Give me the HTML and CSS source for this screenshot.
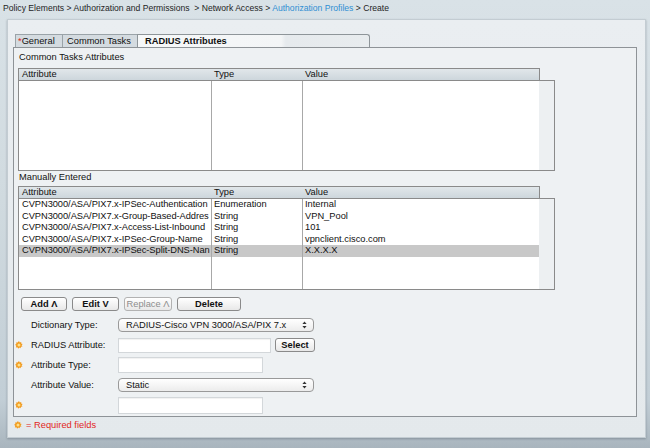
FILE: index.html
```html
<!DOCTYPE html>
<html>
<head>
<meta charset="utf-8">
<link rel="stylesheet" href="styles.css">
</head>
<body>
<div class="crumbs">Policy Elements &gt; Authorization and Permissions &nbsp;&gt; Network Access &gt; <span class="link">Authorization Profiles</span> &gt; Create</div>
<div class="panel">
  <div class="tabs">
    <div class="tab tab-general"><span class="star">*</span>General</div>
    <div class="tab tab-common">Common Tasks</div>
    <div class="tab tab-active">RADIUS Attributes</div>
  </div>
  <div class="content">
    <div class="sect">Common Tasks Attributes</div>
    <div class="ghead"><div class="c1">Attribute</div><div class="c2">Type</div><div class="c3">Value</div></div>
    <div class="gbody gbody-1">
      <div class="gdata"></div>
      <div class="track"></div>
    </div>

    <div class="sect sect-2">Manually Entered</div>
    <div class="ghead"><div class="c1">Attribute</div><div class="c2">Type</div><div class="c3">Value</div></div>
    <div class="gbody gbody-2">
      <div class="gdata">
        <div class="row"><div class="c1">CVPN3000/ASA/PIX7.x-IPSec-Authentication</div><div class="c2">Enumeration</div><div class="c3">Internal</div></div>
        <div class="row"><div class="c1">CVPN3000/ASA/PIX7.x-Group-Based-Addres</div><div class="c2">String</div><div class="c3">VPN_Pool</div></div>
        <div class="row"><div class="c1">CVPN3000/ASA/PIX7.x-Access-List-Inbound</div><div class="c2">String</div><div class="c3">101</div></div>
        <div class="row"><div class="c1">CVPN3000/ASA/PIX7.x-IPSec-Group-Name</div><div class="c2">String</div><div class="c3">vpnclient.cisco.com</div></div>
        <div class="row row-sel"><div class="c1">CVPN3000/ASA/PIX7.x-IPSec-Split-DNS-Nan</div><div class="c2">String</div><div class="c3">X.X.X.X</div></div>
      </div>
      <div class="track"></div>
    </div>

    <div class="btns">
      <div class="btn btn-add">Add &Lambda;</div>
      <div class="btn btn-edit">Edit V</div>
      <div class="btn btn-replace btn-disabled">Replace &Lambda;</div>
      <div class="btn btn-delete">Delete</div>
    </div>

    <div class="frow">
      <span></span>
      <span class="flabel">Dictionary Type:</span>
      <div class="fctl"><div class="select">RADIUS-Cisco VPN 3000/ASA/PIX 7.x<svg class="arrows" viewBox="0 0 5 8" width="5" height="8"><path d="M2.5 0.5L4.6 3H0.4Z M0.4 5H4.6L2.5 7.5Z" fill="#333"/></svg></div></div>
    </div>
    <div class="frow">
      <svg class="gear" viewBox="0 0 10 10" width="8" height="8"><path d="M5 0 L5.9 1.8 L7.9 1.1 L7.6 3.1 L9.6 3.9 L8.2 5.3 L9.4 7 L7.4 7.2 L7 9.2 L5.3 8.1 L3.9 9.7 L3.1 7.8 L1.1 8 L1.6 6 L0 4.8 L1.8 3.8 L1.3 1.8 L3.3 1.9 Z" fill="#f29a1c"/><circle cx="5" cy="5" r="1.9" fill="#fde08a"/></svg>
      <span class="flabel">RADIUS Attribute:</span>
      <div class="fctl"><div class="input input-radius"></div><div class="btn btn-select">Select</div></div>
    </div>
    <div class="frow">
      <svg class="gear" viewBox="0 0 10 10" width="8" height="8"><path d="M5 0 L5.9 1.8 L7.9 1.1 L7.6 3.1 L9.6 3.9 L8.2 5.3 L9.4 7 L7.4 7.2 L7 9.2 L5.3 8.1 L3.9 9.7 L3.1 7.8 L1.1 8 L1.6 6 L0 4.8 L1.8 3.8 L1.3 1.8 L3.3 1.9 Z" fill="#f29a1c"/><circle cx="5" cy="5" r="1.9" fill="#fde08a"/></svg>
      <span class="flabel">Attribute Type:</span>
      <div class="fctl"><div class="input input-type"></div></div>
    </div>
    <div class="frow">
      <span></span>
      <span class="flabel">Attribute Value:</span>
      <div class="fctl"><div class="select">Static<svg class="arrows" viewBox="0 0 5 8" width="5" height="8"><path d="M2.5 0.5L4.6 3H0.4Z M0.4 5H4.6L2.5 7.5Z" fill="#333"/></svg></div></div>
    </div>
    <div class="frow">
      <svg class="gear" viewBox="0 0 10 10" width="8" height="8"><path d="M5 0 L5.9 1.8 L7.9 1.1 L7.6 3.1 L9.6 3.9 L8.2 5.3 L9.4 7 L7.4 7.2 L7 9.2 L5.3 8.1 L3.9 9.7 L3.1 7.8 L1.1 8 L1.6 6 L0 4.8 L1.8 3.8 L1.3 1.8 L3.3 1.9 Z" fill="#f29a1c"/><circle cx="5" cy="5" r="1.9" fill="#fde08a"/></svg>
      <span class="flabel"></span>
      <div class="fctl"><div class="input input-value"></div></div>
    </div>
  </div>
  <div class="reqline">
    <svg class="gear" viewBox="0 0 10 10" width="8" height="8"><path d="M5 0 L5.9 1.8 L7.9 1.1 L7.6 3.1 L9.6 3.9 L8.2 5.3 L9.4 7 L7.4 7.2 L7 9.2 L5.3 8.1 L3.9 9.7 L3.1 7.8 L1.1 8 L1.6 6 L0 4.8 L1.8 3.8 L1.3 1.8 L3.3 1.9 Z" fill="#f29a1c"/><circle cx="5" cy="5" r="1.9" fill="#fde08a"/></svg>
    <span>= Required fields</span>
  </div>
</div>
</body>
</html>
```

FILE: styles.css
```css
html, body {
  margin: 0;
  padding: 0;
}
body {
  width: 650px;
  height: 448px;
  overflow: hidden;
  background: linear-gradient(to bottom, #d9e2e7 0, #d0dadf 200px, #c2ced6 400px, #a9b5be 448px);
  font-family: "Liberation Sans", Arial, sans-serif;
  font-size: 9.3px;
  color: #111;
}
.crumbs {
  height: 19px;
  line-height: 17px;
  padding-left: 3px;
  font-size: 8.6px;
  color: #1e1e1e;
  white-space: nowrap;
}
.link { color: #2f8fd3; }

.panel {
  margin-left: 7px;
  width: 639px;
  height: 419px;
  box-sizing: border-box;
  border: 1px solid #c3ccd2;
  background: linear-gradient(to bottom, #eaeef1, #e4e9ec);
  padding: 14px 8px 0 5px;
  box-shadow: 0 1px 2px rgba(60, 70, 80, 0.35);
}

.tabs {
  display: flex;
  height: 13px;
  margin-left: 2px;
}
.tab {
  height: 13px;
  box-sizing: border-box;
  border: 1px solid #9aa3a8;
  border-bottom: none;
  border-right: none;
  background: #d4dbe0;
  line-height: 12px;
  padding-left: 3px;
  white-space: nowrap;
}
.tab-general { width: 47px; padding-left: 2px; }
.tab-common { width: 75px; padding-left: 4px; }
.tab-active {
  width: 233px;
  padding-left: 7px;
  font-weight: bold;
  background: linear-gradient(to right, #f6f8f9 0, #f3f5f6 62%, #e6eaed 64%, #e8ecee 100%);
  border-color: #8e9599;
  border-right: 1px solid #8e9599;
  border-radius: 0 3px 0 0;
}
.star { color: #e0261b; }

.content {
  height: 370px;
  box-sizing: border-box;
  border: 1px solid #8e9397;
  background: #eef1f3;
  padding: 0 0 0 4px;
}
.sect {
  height: 15px;
  box-sizing: border-box;
  padding: 3px 0 0 1px;
  line-height: 12px;
  margin-bottom: 5px;
}
.sect-2 {
  height: 12px;
  padding-top: 0;
  margin-bottom: 3px;
}

.ghead {
  width: 522px;
  height: 13px;
  box-sizing: border-box;
  border: 1px solid #8a8a8a;
  background: linear-gradient(to bottom, #e1e7ea, #cdd6dc);
  display: flex;
  line-height: 11px;
}
.ghead .c1 { width: 193px; padding-left: 3px; box-sizing: border-box; }
.ghead .c2 { width: 91px; padding-left: 2px; box-sizing: border-box; }
.ghead .c3 { flex: 1; padding-left: 2px; }

.gbody {
  width: 537px;
  box-sizing: border-box;
  border: 1px solid #8a8a8a;
  margin-top: -1px;
  display: flex;
}
.gbody-1 { height: 91px; }
.gbody-2 { height: 92px; }
.gdata {
  width: 520px;
  background:
    linear-gradient(#a8a8a8, #a8a8a8) 192px 0 / 1px 100% no-repeat,
    linear-gradient(#a8a8a8, #a8a8a8) 283px 0 / 1px 100% no-repeat,
    #ffffff;
}
.track {
  width: 15px;
  background: #edf0f2;
}
.row {
  display: flex;
  height: 11.5px;
  line-height: 11.5px;
  white-space: nowrap;
}
.row .c1 {
  width: 193px;
  box-sizing: border-box;
  padding-left: 3px;
  border-right: 1px solid #a8a8a8;
  overflow: hidden;
  letter-spacing: -0.05px;
}
.row .c2 {
  width: 91px;
  box-sizing: border-box;
  padding-left: 2px;
  border-right: 1px solid #a8a8a8;
  overflow: hidden;
}
.row .c3 {
  flex: 1;
  padding-left: 2px;
  overflow: hidden;
}
.row-sel { background: #c8c8c8; }

.btns {
  display: flex;
  gap: 5px;
  margin: 7px 0 0 3px;
}
.btn {
  height: 14px;
  box-sizing: border-box;
  border: 1px solid #8a8a8a;
  border-radius: 3px;
  background: linear-gradient(to bottom, #ffffff, #e8e8e8);
  font-weight: bold;
  text-align: center;
  line-height: 12px;
  white-space: nowrap;
}
.btn-add { width: 46px; }
.btn-edit { width: 47px; }
.btn-replace { width: 48px; }
.btn-delete { width: 64px; }
.btn-disabled { color: #8d8d8d; border-color: #b2b2b2; font-weight: normal; }
.btn-select { width: 40px; margin-left: 4px; }

.btns + .frow { margin-top: 4px; }
.frow {
  display: grid;
  grid-template-columns: 16px 87px 1fr;
  height: 20px;
  align-items: center;
  margin-left: -3px;
}
.gear { display: block; }
.flabel { white-space: nowrap; }
.fctl { display: flex; align-items: center; }

.select {
  width: 196px;
  height: 14px;
  box-sizing: border-box;
  border: 1px solid #999;
  border-radius: 4px;
  background: linear-gradient(to bottom, #ffffff, #ececec);
  padding-left: 7px;
  line-height: 12px;
  display: flex;
  justify-content: space-between;
  align-items: center;
  padding-right: 6px;
}
.arrows { display: block; }

.input {
  box-sizing: border-box;
  background: #ffffff;
  border: 1px solid #d3d7da;
  box-shadow: inset 0 1px 1px rgba(0, 0, 0, 0.06);
}
.input-radius { width: 153px; height: 15px; }
.input-type { width: 145px; height: 16px; }
.input-value { width: 145px; height: 17px; }

.reqline {
  display: flex;
  align-items: center;
  gap: 4px;
  padding: 2px 0 0 1px;
  line-height: 12px;
  color: #e2261c;
}
```
